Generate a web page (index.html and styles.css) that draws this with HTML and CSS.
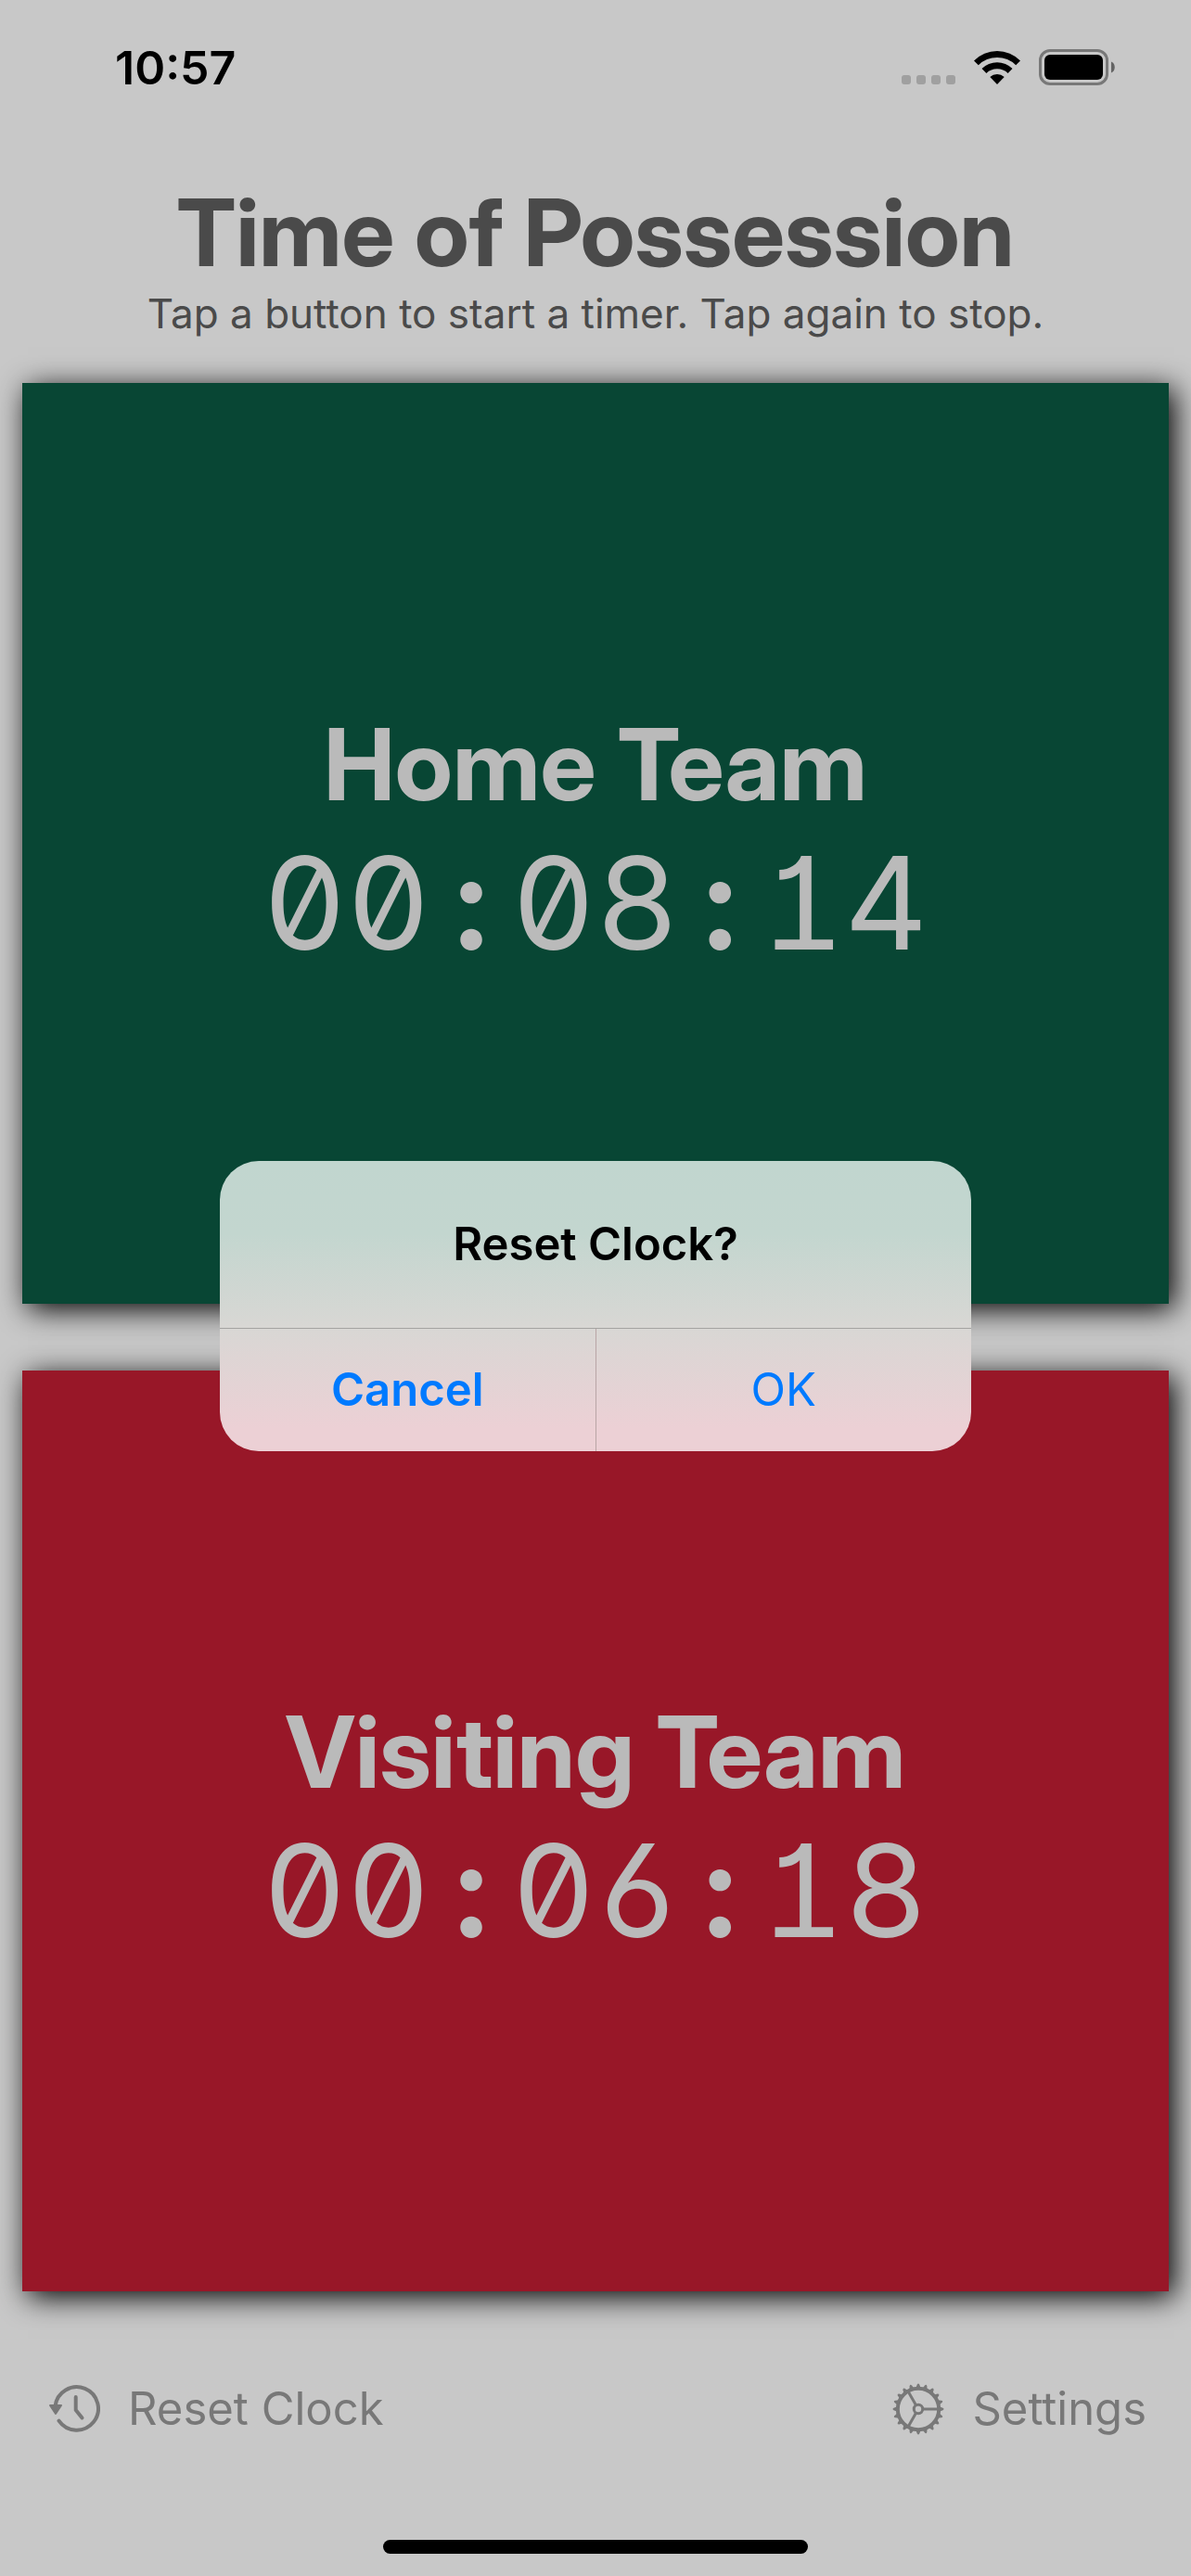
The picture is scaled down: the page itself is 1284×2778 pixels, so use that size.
FILE: index.html
```html
<!DOCTYPE html>
<html lang="en">
<head>
  <meta charset="utf-8">
  <meta name="viewport" content="width=device-width, initial-scale=1">
  <title>Time of Possession</title>
  <link rel="stylesheet" href="styles.css">
</head>
<body>
  <div class="app">
    <div class="status-bar">
      <time class="status-time">10:57</time>
      <div class="status-icons">
        <span class="signal"><i></i><i></i><i></i><i></i></span>
        <svg class="wifi" width="52" height="38" viewBox="0 0 52 38" aria-label="Wi-Fi" role="img">
          <path d="M1 11.500A35 35 0 0 1 51 11.500L46.200 16.300A28.500 28.500 0 0 0 5.800 16.300Z"/>
          <path d="M9.500 20A23.500 23.500 0 0 1 42.500 20L37.600 25A16.800 16.800 0 0 0 14.400 25Z"/>
          <path d="M18.300 29A11.500 11.500 0 0 1 33.700 29L26 37Z"/>
        </svg>
        <svg class="battery" width="82" height="39" viewBox="0 0 82 39" aria-label="Battery full" role="img">
          <rect x="1.500" y="1.500" width="72" height="36" rx="10.500" fill="none" stroke="#787878" stroke-width="3"/>
          <rect x="6" y="6" width="63" height="27" rx="6"/>
          <path d="M78 13.500C83 15 83 24 78 25.500Z" fill="#646464"/>
        </svg>
      </div>
    </div>

    <header class="header">
      <h1 class="title">Time of Possession</h1>
      <p class="subtitle">Tap a button to start a timer. Tap again to stop.</p>
    </header>

    <main class="teams">
      <button class="team team-home" type="button">
        <span class="team-name">Home Team</span>
        <span class="team-clock"><span>00</span><span class="colon">:</span><span>08</span><span class="colon">:</span><span>14</span></span>
      </button>
      <button class="team team-visiting" type="button">
        <span class="team-name">Visiting Team</span>
        <span class="team-clock"><span>00</span><span class="colon">:</span><span>06</span><span class="colon">:</span><span>18</span></span>
      </button>
    </main>

    <footer class="toolbar">
      <button class="tool" type="button">
        <svg class="tool-icon" width="56" height="56" viewBox="0 0 56 56" aria-hidden="true">
          <g fill="none" stroke="currentColor" stroke-width="4" stroke-linecap="round" stroke-linejoin="round">
            <path d="M7.500 25A23.300 23.300 0 1 1 11.500 40.700"/>
            <path d="M29.700 15V29L36.500 37.500"/>
          </g>
          <path d="M2 24H14L8 33Z" fill="currentColor" stroke="currentColor" stroke-width="2" stroke-linejoin="round"/>
        </svg>
        <span>Reset Clock</span>
      </button>
      <button class="tool" type="button">
        <svg class="tool-icon" width="56" height="56" viewBox="0 0 56 56" aria-hidden="true">
          <defs>
            <path id="tooth" d="M50 25L54.500 26.800Q56.500 28 54.500 29.200L50 31Z"/>
            <g id="teeth">
              <use href="#tooth"/>
              <use href="#tooth" transform="rotate(18 28 28)"/>
              <use href="#tooth" transform="rotate(36 28 28)"/>
              <use href="#tooth" transform="rotate(54 28 28)"/>
              <use href="#tooth" transform="rotate(72 28 28)"/>
            </g>
          </defs>
          <g fill="currentColor">
            <use href="#teeth"/>
            <use href="#teeth" transform="rotate(90 28 28)"/>
            <use href="#teeth" transform="rotate(180 28 28)"/>
            <use href="#teeth" transform="rotate(270 28 28)"/>
          </g>
          <g fill="none" stroke="currentColor" stroke-width="3">
            <circle cx="28" cy="28" r="22.200" stroke-width="4"/>
            <circle cx="28" cy="28" r="4.700"/>
            <path d="M33 28H49M25.500 23.700L17.500 9.800M25.500 32.300L17.500 46.200"/>
          </g>
        </svg>
        <span>Settings</span>
      </button>
    </footer>
    <div class="home-indicator"></div>
  </div>

  <div class="overlay">
    <div class="alert" role="alertdialog" aria-labelledby="alert-title">
      <h2 class="alert-title" id="alert-title">Reset Clock?</h2>
      <div class="alert-actions">
        <button class="alert-button alert-cancel" type="button">Cancel</button>
        <button class="alert-button" type="button">OK</button>
      </div>
    </div>
  </div>
</body>
</html>
```
FILE: styles.css
```css
* {
  box-sizing: border-box;
}

body {
  margin: 0;
  background: #c8c8c8;
  font-family: Inter, "Liberation Sans", sans-serif;
}

button {
  margin: 0;
  padding: 0;
  border: 0;
  background: none;
  color: inherit;
  font: inherit;
}

.app {
  display: flex;
  flex-direction: column;
  min-height: 100vh;
}

/* Status bar */
.status-bar {
  display: flex;
  justify-content: space-between;
  height: 141px;
  padding: 43px 82px 0 124px;
}

.status-time {
  font-size: 50px;
  font-weight: 600;
  line-height: 60px;
}

.status-icons {
  display: flex;
  align-items: flex-end;
  gap: 19px;
  height: 49px;
}

.signal {
  display: flex;
  gap: 6px;
  padding-bottom: 1px;
}

.signal i {
  width: 10px;
  height: 10px;
  border-radius: 3px;
  background: #a0a0a0;
}

/* Header */
.header {
  padding: 48px 24px;
  color: #4a4a4a;
  text-align: center;
}

.title,
.team-name {
  font-family: "Inter Display", Inter, "Liberation Sans", sans-serif;
  font-weight: 700;
}

.title {
  margin: 0;
  font-size: 101px;
  line-height: 122px;
}

.subtitle {
  margin: 0;
  font-size: 44px;
  line-height: 54px;
}

/* Team buttons */
.teams {
  display: flex;
  flex: 1;
  flex-direction: column;
  gap: 72px;
  padding: 0 24px;
}

.team {
  display: flex;
  flex: 1;
  flex-direction: column;
  align-items: center;
  justify-content: center;
  color: #bababa;
  box-shadow: 6px 6px 30px #000;
}

.team-home {
  background: #084634;
}

.team-visiting {
  background: #981728;
}

.team-name {
  font-size: 107px;
  line-height: 128px;
}

.team-clock {
  display: flex;
  font-size: 139px;
  font-feature-settings: "tnum", "zero", "cv01", "cv03";
  line-height: 172px;
}

.colon {
  width: 88px;
  font-weight: 700;
}

/* Toolbar */
.toolbar {
  display: flex;
  align-items: center;
  justify-content: space-between;
  height: 138px;
  margin-top: 58px;
  padding: 0 48px 0 52px;
  color: #787878;
}

.tool {
  display: flex;
  align-items: center;
  gap: 30px;
  font-size: 49px;
  line-height: 60px;
}

.home-indicator {
  align-self: center;
  width: 458px;
  height: 15px;
  margin: 72px 0 24px;
  border-radius: 8px;
  background: #000;
}

/* Alert */
.overlay {
  position: fixed;
  inset: 0;
  display: flex;
  align-items: center;
  justify-content: center;
  padding: 141px 24px 102px;
}

.alert {
  width: 810px;
  overflow: hidden;
  border-radius: 42px;
  background: linear-gradient(#c1d6cf 0%, #c3d6cf 25%, #d8d7d4 57%, #ecd0d5 92%, #ecd0d5 100%);
}

.alert-title {
  margin: 0;
  padding: 60px 48px;
  font-size: 49px;
  font-weight: 600;
  line-height: 60px;
  text-align: center;
}

.alert-actions {
  display: flex;
  border-top: 1px solid #a4a3a1;
}

.alert-button {
  flex: 1;
  height: 132px;
  color: #007aff;
  font-size: 49px;
  line-height: 60px;
}

.alert-cancel {
  border-right: 1px solid #b9a5a6;
  font-weight: 600;
}
```
